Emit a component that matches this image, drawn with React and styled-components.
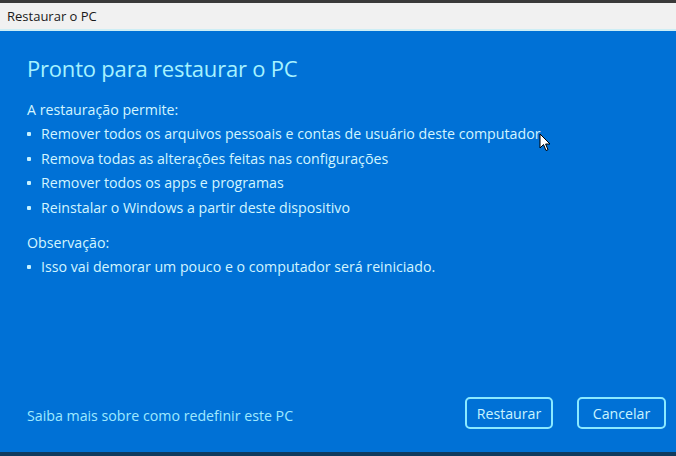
import React from "react";
import styled, { createGlobalStyle } from "styled-components";

const Global = createGlobalStyle`
  html, body { margin: 0; padding: 0; }
  body { width: 676px; height: 456px; overflow: hidden; font-family: "Open Sans", "Noto Sans", sans-serif; }
  #root { width: 676px; height: 456px; }
`;

const Frame = styled.div`
  width: 676px;
  height: 456px;
  display: flex;
  flex-direction: column;
  background: #2b2b2b;
  position: relative;
  overflow: hidden;
`;

const TopStrip = styled.div`
  height: 3px;
  background: #3a3a3a;
  flex: none;
`;

const TitleBar = styled.div`
  height: 26px;
  flex: none;
  background: #f1f1f1;
  border-bottom: 2px solid #cdeef5;
  display: flex;
  align-items: center;
  padding-left: 7px;
  font-size: 13px;
  color: #1a1a1a;
`;

const Body = styled.div`
  flex: 1;
  background: #0071d6;
  display: flex;
  flex-direction: column;
  padding: 22px 10px 23px 27px;
`;

const Heading = styled.h1`
  margin: 0 0 14px;
  font-weight: 400;
  font-size: 22px;
  line-height: 30px;
  color: #a6f2ff;
  letter-spacing: -0.2px;
`;

const Section = styled.div`
  margin-bottom: ${(p) => p.$gap || 0}px;
`;

const Label = styled.div`
  font-size: 14.2px;
  line-height: 25px;
  color: #d2f5ff;
`;

const List = styled.ul`
  list-style: none;
  margin: 0;
  padding: 0;
`;

const Item = styled.li`
  display: flex;
  align-items: center;
  font-size: 14.2px;
  line-height: 24.5px;
  color: #d2f5ff;
  &::before {
    content: "";
    width: 4px;
    height: 4px;
    border-radius: 1px;
    background: #c6f1ff;
    margin: 0 10px 0 0;
    flex: none;
  }
`;

const Spacer = styled.div`
  flex: 1;
`;

const Footer = styled.div`
  display: flex;
  align-items: center;
`;

const Link = styled.a`
  font-size: 14.2px;
  color: #9fe9ff;
  flex: 1;
  padding-top: 5px;
  text-decoration: none;
`;

const Buttons = styled.div`
  display: flex;
  gap: 24px;
`;

const Button = styled.button`
  width: ${(p) => p.$w}px;
  height: 32px;
  box-sizing: border-box;
  border: 2px solid #8ae9ff;
  border-radius: 5px;
  background: transparent;
  color: #c9f4ff;
  font-family: inherit;
  font-size: 14.2px;
  padding: 0;
`;

const BottomStrip = styled.div`
  height: 4px;
  flex: none;
  background: #103a5e;
`;

const Cursor = styled.svg`
  position: absolute;
  left: 539px;
  top: 133px;
`;

export default function App() {
  return (
    <>
      <Global />
      <Frame>
        <TopStrip />
        <TitleBar>Restaurar o PC</TitleBar>
        <Body>
          <Heading>Pronto para restaurar o PC</Heading>
          <Section $gap={10}>
            <Label>A restauração permite:</Label>
            <List>
              <Item>Remover todos os arquivos pessoais e contas de usuário deste computador</Item>
              <Item>Remova todas as alterações feitas nas configurações</Item>
              <Item>Remover todos os apps e programas</Item>
              <Item>Reinstalar o Windows a partir deste dispositivo</Item>
            </List>
          </Section>
          <Section>
            <Label>Observação:</Label>
            <List>
              <Item>Isso vai demorar um pouco e o computador será reiniciado.</Item>
            </List>
          </Section>
          <Spacer />
          <Footer>
            <Link href="#">Saiba mais sobre como redefinir este PC</Link>
            <Buttons>
              <Button $w={88}>Restaurar</Button>
              <Button $w={89}>Cancelar</Button>
            </Buttons>
          </Footer>
        </Body>
        <BottomStrip />
        <Cursor width="12" height="19" viewBox="0 0 12 19">
          <path d="M1 1 L1 15 L4.5 11.5 L7 17.5 L9 16.7 L6.6 11 L11 11 Z" fill="#fff" stroke="#000" strokeWidth="1" strokeLinejoin="round" />
        </Cursor>
      </Frame>
    </>
  );
}
